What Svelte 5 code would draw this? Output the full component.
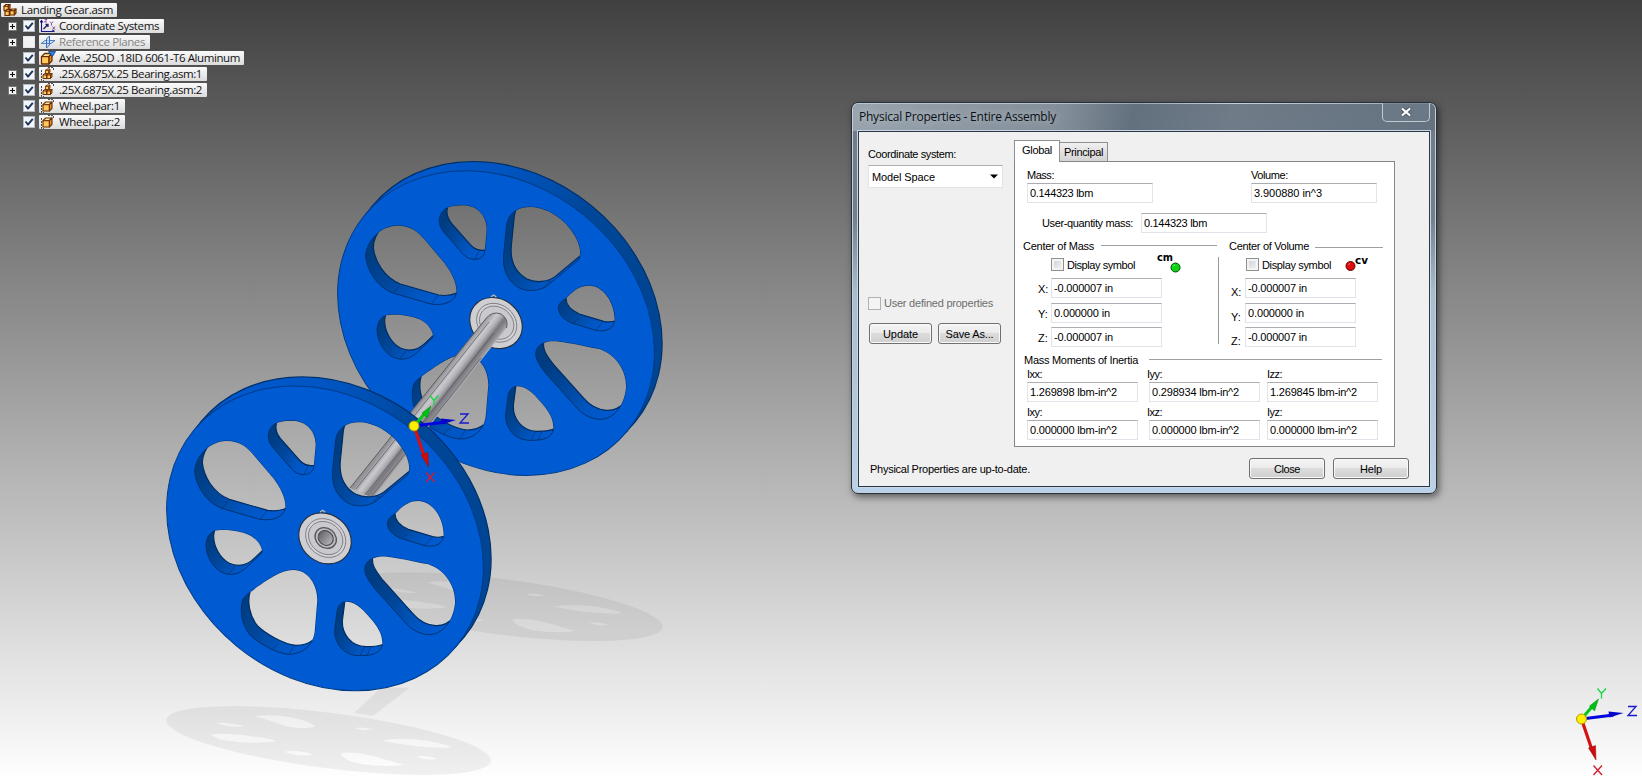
<script>
  const holes = [
    'M200 213 C240 213 262 232 285 260 L340 325 C362 355 378 385 376 415 C372 440 340 454 300 448 L185 415 C135 395 108 345 104 305 C104 265 145 213 200 213Z',
    'M395 152 C435 152 467 180 467 225 L461 290 C460 315 420 325 395 297 L338 232 C322 212 318 185 340 165 C352 155 375 152 395 152Z',
    'M600 157 C660 160 712 205 735 250 C750 280 750 302 742 316 L650 392 C625 410 590 412 565 400 C530 380 514 345 518 300 L527 210 C532 175 560 157 600 157Z',
    'M775 393 C815 393 850 440 851 495 C850 522 825 533 795 527 L722 505 C695 493 682 478 682 458 C686 440 700 436 712 425 C730 405 750 393 775 393Z',
    'M660 560 C690 558 760 575 805 583 C855 600 888 650 885 700 C880 750 850 795 805 794 C775 792 750 775 735 757 L645 657 C620 625 612 610 615 590 C620 570 640 562 660 560Z',
    'M560 695 C590 695 615 725 640 755 C660 780 668 800 667 825 C660 852 635 857 595 857 C550 855 523 820 524 780 L531 725 C534 705 545 695 560 695Z',
    'M400 600 C445 600 472 645 472 690 L464 785 C458 830 425 853 385 853 C345 850 290 815 270 795 C245 765 238 720 248 690 C254 675 275 665 290 652 C320 632 360 600 400 600Z',
    'M175 481 C200 478 245 485 265 494 C290 505 308 530 306 548 L262 590 C240 612 215 620 185 607 C155 590 138 555 138 525 C140 495 155 482 175 481Z'
  ];
  const creases = 'M205 393L187 415 M322 422L300 448 M445 287L430 316 M655 378L640 399 M650 376L661 383 M745 490L725 505 M815 503L793 527 M358 820L338 836 M405 825L385 853 M613 830L600 857 M633 828L621 857 M225 588L206 613';

  const tree = [
    { label: 'Coordinate Systems', width: 100, box: 125, plus: true, on: true, icon: 'cs' },
    { label: 'Reference Planes', width: 86, box: 111, plus: true, on: false, icon: 'planes', muted: true },
    { label: 'Axle .25OD .18ID 6061-T6 Aluminum', width: 181, box: 205, on: true, icon: 'axle' },
    { label: '.25X.6875X.25 Bearing.asm:1', width: 143, box: 168, plus: true, on: true, icon: 'asm' },
    { label: '.25X.6875X.25 Bearing.asm:2', width: 143, box: 168, plus: true, on: true, icon: 'asm' },
    { label: 'Wheel.par:1', width: 61, box: 86, on: true, icon: 'part' },
    { label: 'Wheel.par:2', width: 61, box: 86, on: true, icon: 'part' }
  ];
  const massCoords = [['X:', '-0.000007 in'], ['Y:', '0.000000 in'], ['Z:', '-0.000007 in']];
  const inertia = [
    [['Ixx:', '1.269898 lbm-in^2'], ['Iyy:', '0.298934 lbm-in^2'], ['Izz:', '1.269845 lbm-in^2']],
    [['Ixy:', '0.000000 lbm-in^2'], ['Ixz:', '0.000000 lbm-in^2'], ['Iyz:', '0.000000 lbm-in^2']]
  ];

  // Tracks a label out or in so that it takes the given width in pixels.
  function fit(node, width) {
    const natural = node.getBoundingClientRect().width;
    node.style.letterSpacing = (width - natural) / node.textContent.length + 'px';
  }
</script>

{#snippet wheel(x, y, bored)}
  <g transform="translate({x} {y}) scale(.33333)">
    <g mask="url(#bore)">
      <g fill="url(#rim)" stroke="#00306c" stroke-width="4">
        <g transform="rotate(39.35 518 478)"><ellipse cx="518" cy="478" rx="510" ry="418" fill="#004593" /></g>
      </g>
      <path d="M105 177L128 150L160 118L250 60L400 22L518 22L700 80L908 240L994 566L908 806L885 833L495 505Z" fill="none" />
      <g fill="url(#rim)" clip-path="url(#body)"><rect x="0" y="0" width="1020" height="990" /></g>
      <path d="M105 177L128 150M908 806L885 833" stroke="#00306c" stroke-width="3" />
      <ellipse cx="495" cy="505" rx="510" ry="418" transform="rotate(39.35 495 505)" fill="#005ad2" stroke="#003c86" stroke-width="3" />
      {#each holes as d}
        <path {d} fill="url(#wall)" stroke="#00336f" stroke-width="3" />
      {/each}
      <path d={creases} stroke="#003574" stroke-width="2" fill="none" />
    </g>
    <g clip-path="url(#mouths)">
      {#each holes as d}
        <path {d} transform="translate(23 -27)" fill="none" stroke="#002c60" stroke-width="3.5" />
      {/each}
    </g>
    <g transform="rotate(39.35 495 505)" fill="none" stroke="#77777c" stroke-width="2.5">
      <ellipse cx="495" cy="505" rx="83" ry="72" fill="#cfcfd3" stroke="#24313f" stroke-width="3.5" />
      <ellipse cx="496" cy="503" rx="64" ry="54" fill="#d3d3d7" />
      <ellipse cx="496" cy="503" rx="55" ry="46" fill="#cacace" />
      {#if bored}
        <ellipse cx="496" cy="503" rx="34" ry="29" fill="#bdbdc1" stroke="#55555a" stroke-width="4" />
        <ellipse cx="496" cy="503" rx="24" ry="21" fill="url(#metal-bore)" stroke="#444" stroke-width="3" />
      {/if}
    </g>
    <path d="M480 426L488 421L496 427" fill="none" stroke="#b7b7bb" stroke-width="4" />
  </g>
{/snippet}

{#snippet triad(x, y, zx, zy)}
  <g transform="translate({x} {y})">
    <path d="M0 0L12 -14" stroke="#00c818" stroke-width="3" />
    <path d="M17 -20L8 -13L13 -8Z" fill="#00bf14" stroke="#008d14" stroke-width=".5" />
    <path d="M0 0L32 -4" stroke="#0404df" stroke-width="3" />
    <path d="M42 -6L27 -7.5L28 -1.5Z" fill="#0606c8" />
    <path d="M0 0L10.500 31" stroke="#d51212" stroke-width="3.200" />
    <path d="M14.500 41L7 29L14 26.500Z" fill="#cf0b0b" stroke="#8b1010" stroke-width=".5" />
    <circle r="5" fill="#fff000" stroke="#b09a00" stroke-width="1" />
    <g fill="none" stroke-width="1.300">
      <path d="M16 -30.500L20 -25.500L24.500 -30.500M20 -25.500V-20.500" stroke="#13d943" />
      <path d="M{zx} {zy}h8l-8 9h9" stroke="#1818d0" />
      <path d="M12 46.500l8.500 9.500m0 -9.500l-8.500 9.500" stroke="#d51c2d" />
    </g>
  </g>
{/snippet}

{#snippet cube(x, y, s)}
  <g transform="translate({x} {y}) scale({s})" stroke="#6b2c00" stroke-width={s < 0.8 ? 1.9 : 1.2} stroke-linejoin="round">
    <path d="M0 3L3 0H10L7 3Z" fill="#ffe9a6" />
    <path d="M7 3L10 0V7L7 10Z" fill="#e08a14" />
    <path d="M0 3H7V10H0Z" fill="#ffc95c" />
  </g>
{/snippet}

{#snippet icon(kind)}
  <svg class="icon" width="16" height="14" viewBox="0 0 16 14">
    {#if kind === 'cs'}
      <path d="M1.500 2V12.500H14M0 3.500L1.500 1.500L3 3.500M12.500 11L14.500 12.500" fill="none" stroke="#17178c" stroke-width="1.100" />
      <path d="M3.500 10L8 5.500M5.500 5.500H8V8" fill="none" stroke="#20205f" stroke-width="1.300" />
      <path d="M4.500 .5H7L4.500 3H7M10 2.500L11.500 4.500L13 2.500M11.500 4.500V6.500M12.500 7.500L15 10.500M15 7.500L12.500 10.500" fill="none" stroke="#7d2c96" stroke-width=".8" />
    {:else if kind === 'planes'}
      <path d="M1 8.500L5 5.500H15L11 8.500Z" fill="#cfe2fa" stroke="#4d7fc4" />
      <path d="M6.500 4L9.500 1V10L6.500 13Z" fill="#c1d9f8" fill-opacity=".7" stroke="#3c6cb7" />
      <path d="M1 8.500H11" fill="none" stroke="#4d7fc4" />
    {:else if kind === 'axle'}
      {@render cube(1.5, 2.5, 1.05)}
      <path d="M8.500 .5H15.500L12.500 5.500Z" fill="#2b83de" stroke="#0b3f8c" stroke-width=".8" />
    {:else if kind === 'asm'}
      <path d="M1.500 3V13.500H4M8 .5H13.500V3" stroke="#222" stroke-dasharray="2 1" fill="none" stroke-width=".8" />
      {@render cube(5.5, 2, 0.45)}
      {@render cube(3, 6.5, 0.5)}
      {@render cube(7, 6.5, 0.5)}
    {:else if kind === 'root'}
      {@render cube(2, 1.5, 0.6)}
      {@render cube(3, 6.5, 0.6)}
      {@render cube(8, 6, 0.6)}
    {:else}
      <path d="M1.500 3V13.500H4M8 .5H13.500V3" stroke="#222" stroke-dasharray="2 1" fill="none" stroke-width=".8" />
      {@render cube(3, 3, 0.9)}
    {/if}
  </svg>
{/snippet}

<main>
  <svg class="scene" width="1642" height="780" viewBox="0 0 1642 780">
    <defs>
      <linearGradient id="rim" gradientUnits="userSpaceOnUse" x1="300" y1="20" x2="900" y2="420">
        <stop offset="0" stop-color="#0058cc" /><stop offset=".3" stop-color="#0054bf" />
        <stop offset=".65" stop-color="#004799" /><stop offset="1" stop-color="#004593" />
      </linearGradient>
      <linearGradient id="wall" x1="0" y1=".4" x2=".75" y2="1">
        <stop offset="0" stop-color="#003c80" /><stop offset=".4" stop-color="#00479c" />
        <stop offset=".75" stop-color="#0055c0" /><stop offset="1" stop-color="#0059cf" />
      </linearGradient>
      <linearGradient id="metal-bore"><stop offset="0" stop-color="#66666a" /><stop offset="1" stop-color="#b4b4b8" /></linearGradient>
      <linearGradient id="steel" gradientUnits="userSpaceOnUse" x1="449" y1="365" x2="467" y2="379">
        <stop offset="0" stop-color="#929297" /><stop offset=".13" stop-color="#a9a9ae" />
        <stop offset=".3" stop-color="#cacace" /><stop offset=".48" stop-color="#b0b0b5" />
        <stop offset=".68" stop-color="#77777d" /><stop offset=".85" stop-color="#8d8d92" /><stop offset="1" stop-color="#b3b3b7" />
      </linearGradient>
      <clipPath id="body">
        <ellipse cx="518" cy="478" rx="508" ry="416" transform="rotate(39.35 518 478)" />
        <path d="M105 177L128 150L908 806L885 833Z" />
      </clipPath>
      <clipPath id="mouths">{#each holes as d}<path {d} />{/each}</clipPath>
      <mask id="bore" maskUnits="userSpaceOnUse" x="0" y="0" width="1020" height="990">
        <rect width="1020" height="990" fill="#fff" />
        <g clip-path="url(#mouths)">{#each holes as d}<path {d} transform="translate(23 -27)" />{/each}</g>
      </mask>
      <mask id="gaps" maskUnits="userSpaceOnUse" x="160" y="695" width="335" height="85">
        <rect x="160" y="695" width="335" height="85" fill="#fff" />
        <g fill="#000">
          <path d="M254 714Q276 711 301 718Q316 724 311 725Q291 728 273 720Z" />
          <path d="M209 732Q227 730 251 734Q275 737 273 739Q245 742 219 737Z" />
          <path d="M378 738Q403 734 432 740Q449 744 445 745Q416 746 378 738Z" />
          <path d="M338 751Q346 748 369 753L400 762Q382 765 357 761Q340 757 338 751Z" />
          <path d="M215 721Q224 719 243 724Q233 726 215 721Z" />
          <path d="M352 726Q357 724 370 727Q358 729 352 726Z" />
          <path d="M282 749Q300 747 310 752Q297 754 282 749Z" />
          <path d="M413 754Q420 752 433 756Q423 758 413 754Z" />
        </g>
      </mask>
    </defs>

    <g fill="#000" fill-opacity=".055" transform="translate(-2.100 -8) scale(1.0142)">
      <g mask="url(#gaps)"><ellipse cx="326" cy="738" rx="161.300" ry="27.400" transform="rotate(7.250 326 738)" /></g>
      <g transform="translate(169.300 -132)"><g mask="url(#gaps)"><ellipse cx="326" cy="738" rx="161.300" ry="27.400" transform="rotate(7.250 326 738)" /></g></g>
      <path d="M351 711L378 686H406L370 713.500Z" />
    </g>

    {@render wheel(331, 154.7, false)}
    <path d="M485.500 319Q492 310.500 501 314Q509 319 506.500 328L373 498L350 488Z" fill="url(#steel)" />
    <path d="M350 488L485.500 319Q492 310.500 501 314Q509 319 506.500 328" fill="none" stroke="#5d5d62" stroke-width="1" />
    <path d="M356 489L489 322M365 495L494 333M371 497L481 358" fill="none" stroke="#55555b" stroke-width=".7" />
    {@render wheel(160, 370, true)}
    {@render triad(414, 426, 46, -12)}
    {@render triad(1581.5, 719, 46.5, -12.5)}
  </svg>

  <nav class="tree">
    <div class="chip root">{@render icon('root')}<span use:fit={92}>Landing Gear.asm</span></div>
    {#each tree as row}
      <div class="row">
        <span class="slot">{#if row.plus}<svg width="9" height="9" viewBox="0 0 9 9"><rect x=".5" y=".5" width="8" height="8" fill="#f5f5f5" stroke="#777" /><path d="M2 4.500H7M4.500 2V7" stroke="#111" stroke-width="1.200" /></svg>{/if}</span>
        <svg class="check" width="12" height="12" viewBox="0 0 12 12">
          <rect x=".5" y=".5" width="11" height="11" fill={row.on ? '#f2f6fa' : '#f3f3f3'} stroke={row.on ? '#b4bbc2' : '#e6e6e6'} />
          {#if row.on}<path d="M2.500 5.500L5 8.500L9.800 2.800" fill="none" stroke="#1c315c" stroke-width="1.900" />{/if}
        </svg>
        <div class="chip" class:muted={row.muted} style="width: {row.box}px">{@render icon(row.icon)}<span use:fit={row.width}>{row.label}</span></div>
      </div>
    {/each}
  </nav>

  <section class="dialog">
    <header>
      <h1><span use:fit={197}>Physical Properties - Entire Assembly</span></h1>
      <button class="x" aria-label="Close window"><svg width="12" height="10" viewBox="0 0 12 10"><path d="M2 1.500L10 8.500M10 1.500L2 8.500" stroke="#4b5560" stroke-width="4" /><path d="M2 1.500L10 8.500M10 1.500L2 8.500" stroke="#fff" stroke-width="2.300" /></svg></button>
    </header>
    <div class="client">
      <div class="body">
        <aside>
          <span class="lbl" use:fit={88}>Coordinate system:</span>
          <div class="combo"><span use:fit={63}>Model Space</span><svg width="8" height="5" viewBox="0 0 8 5"><path d="M0 .5H8L4 4.500Z" /></svg></div>
          <div class="user"><i class="box off"></i><span use:fit={109}>User defined properties</span></div>
          <div class="pair"><button><span use:fit={35}>Update</span></button><button><span use:fit={48}>Save As...</span></button></div>
        </aside>
        <div class="tabs">
          <div class="tabbar"><div class="tab active"><span use:fit={30}>Global</span></div><div class="tab"><span use:fit={39}>Principal</span></div></div>
          <div class="panel">
            <div class="top">
              <label><span use:fit={27}>Mass:</span><div class="field wide"><span use:fit={63}>0.144323 lbm</span></div></label>
              <label><span use:fit={37}>Volume:</span><div class="field wide"><span use:fit={68}>3.900880 in^3</span></div></label>
            </div>
            <div class="quantity"><span use:fit={91}>User-quantity mass:</span><div class="field wide"><span use:fit={63}>0.144323 lbm</span></div></div>
            <div class="centers">
              <div class="center mass">
                <div class="legend"><span use:fit={71}>Center of Mass</span><hr /></div>
                <div class="symbol"><i class="box"></i><span use:fit={68}>Display symbol</span>
                  <svg width="30" height="24" viewBox="0 0 30 24"><text x="3" y="8" textLength="16" lengthAdjust="spacingAndGlyphs">cm</text><circle cx="21.500" cy="14.500" r="4.500" fill="#0bd414" stroke="#054b08" /><path d="M19.500 13L21 12" stroke="#9dff9e" /></svg>
                </div>
                {#each massCoords as [axis, value]}
                  <div class="coord"><span>{axis}</span><div class="field"><span use:fit={value[0] === '-' ? 59 : 56}>{value}</span></div></div>
                {/each}
              </div>
              <div class="divider"></div>
              <div class="center volume">
                <div class="legend"><span use:fit={80}>Center of Volume</span><hr /></div>
                <div class="symbol"><i class="box"></i><span use:fit={69}>Display symbol</span>
                  <svg width="30" height="24" viewBox="0 0 30 24"><text x="10" y="11" textLength="13" lengthAdjust="spacingAndGlyphs">cv</text><circle cx="5.500" cy="13" r="4.500" fill="#e00808" stroke="#5e0505" /><path d="M3.500 11.500L5 10.500" stroke="#ff9292" /></svg>
                </div>
                {#each massCoords as [axis, value]}
                  <div class="coord"><span>{axis}</span><div class="field"><span use:fit={value[0] === '-' ? 59 : 56}>{value}</span></div></div>
                {/each}
              </div>
            </div>
            <div class="legend moments"><span use:fit={114}>Mass Moments of Inertia</span><hr /></div>
            {#each inertia as line}
              <div class="inertia">
                {#each line as [name, value]}
                  <label><span use:fit={15}>{name}</span><div class="field"><span use:fit={87}>{value}</span></div></label>
                {/each}
              </div>
            {/each}
          </div>
        </div>
      </div>
      <footer><span class="status"><span use:fit={160}>Physical Properties are up-to-date.</span></span><button><span use:fit={26}>Close</span></button><button><span use:fit={22}>Help</span></button></footer>
    </div>
  </section>
</main>

<style>
  :global(body) { margin: 0; overflow: hidden; }
  main { position: relative; width: 1642px; height: 780px; overflow: hidden; background: linear-gradient(#404040, #fff); font: 11px/14px "Liberation Sans", Arial, sans-serif; color: #000; }
  * { box-sizing: border-box; }
  span { white-space: nowrap; }
  .scene { position: absolute; inset: 0; }
  .tree { position: absolute; left: 1px; top: 3px; font: 11.500px/14px "Open Sans", "Noto Sans", sans-serif; }
  .row { display: flex; align-items: center; height: 16px; }
  .slot { display: flex; width: 22px; padding-left: 7px; }
  .check { margin-right: 4px; }
  .chip { display: flex; align-items: center; height: 14px; background: linear-gradient(#fafafa, #dcdcdc); border-radius: 1px; color: #111; }
  .row .chip { padding-left: 1px; }
  .chip .icon { flex: none; margin-right: 3px; }
  .root { width: 116px; margin-bottom: 1px; padding-left: 1px; }
  .muted { color: #858585; }

  .dialog { position: absolute; left: 851px; top: 102px; width: 586px; height: 392px; padding: 0 6px 7px; border: 1px solid #27313b; border-radius: 7px; background: linear-gradient(#6f7b87 0, #72808e 115px, #a9bdcf 190px, #b9d1ea 100%); box-shadow: inset 0 0 0 1px #c5d0da, 2px 3px 7px rgba(0,0,0,.5); }
  header { display: flex; height: 28px; justify-content: space-between; margin: 0 -5px; padding-left: 6px; background: linear-gradient(100deg, rgba(180,190,200,.6), rgba(160,170,180,.4) 36%, rgba(75,90,105,.35) 48%, transparent 65%, rgba(80,95,110,.35)); border-radius: 5px 5px 0 0; }
  h1 { margin: 0; font: 12px/28px "Open Sans", "Noto Sans", sans-serif; color: #0b1015; text-shadow: 0 0 8px rgba(255,255,255,.55); }
  button { padding: 0; font: inherit; color: #000; border: 1px solid #707070; border-radius: 3px; background: linear-gradient(#f4f4f4, #ebebeb 48%, #dcdcdc 50%, #cfcfcf); box-shadow: inset 0 0 0 1px #f9f9f9; }
  .x { display: flex; justify-content: center; align-items: center; width: 48px; height: 19px; margin: 0 5px 0 0; border: 1px solid #c1c9d0; border-top: 0; border-radius: 0 0 5px 5px; background: rgba(110,122,135,.7); box-shadow: none; }
  .client { height: 356px; border: 1px solid #2b3947; background: #f0f0f0; box-shadow: 0 0 0 1px #c9d7e4; }
  .body { display: flex; height: 316px; }
  aside { width: 155px; padding: 15px 0 0 9px; }
  .lbl { display: inline-block; height: 18px; vertical-align: top; }
  .combo { display: flex; align-items: center; justify-content: space-between; width: 135px; height: 23px; padding: 0 4px 0 3px; background: #fff; border: 1px solid #e2e3ea; border-top-color: #abadb3; }
  .user { display: flex; align-items: center; gap: 3px; margin-top: 108px; color: #6d6d6d; }
  .box { flex: none; width: 13px; height: 13px; border: 1px solid #8e8f8f; background: linear-gradient(135deg, #cbcfd5, #f6f6f6); box-shadow: inset 0 0 0 2px #f4f4f4; }
  .off { border-color: #b1b1b1; background: #f4f4f4; }
  .pair { display: flex; gap: 6px; margin: 13px 0 0 1px; }
  .pair button { width: 63px; height: 21px; }
  .tabs { width: 381px; padding-top: 8px; }
  .tabbar { display: flex; align-items: flex-end; height: 21px; }
  .tab { height: 19px; padding: 2px 0 0; width: 48px; text-align: center; border: 1px solid #8d8f92; border-left: 0; border-bottom: 0; background: linear-gradient(#f0f0f0, #d4d4d4); }
  .active { height: 22px; width: 46px; border-left: 1px solid #8d8f92; background: #fff; margin-bottom: -1px; z-index: 1; }
  .panel { height: 286px; border: 1px solid #84878a; background: #fff; padding: 6px 0 0 8px; }
  label { display: block; }
  label > span { display: inline-block; vertical-align: top; height: 14px; }
  .top { display: flex; gap: 98px; padding-left: 4px; height: 45px; }
  .field { display: flex; align-items: center; width: 111px; height: 20px; padding: 0 0 0 2px; border: 1px solid #e2e3ea; border-top-color: #abadb3; background: #fff; }
  .wide { width: 126px; }
  .top .field, .inertia .field { margin-top: 1px; }
  .quantity { display: flex; align-items: center; gap: 8px; padding-left: 19px; height: 20px; }
  .centers { display: flex; margin-top: 5px; height: 113px; }
  .legend { display: flex; align-items: center; height: 15px; }
  hr { flex: 1; margin: 0; height: 1px; border: 0; background: #a0a0a0; }
  .mass { width: 194px; }
  .mass hr { margin-left: 7px; }
  .moments hr { margin-left: 11px; }
  .divider { width: 1px; height: 87px; margin: 19px 10px 0 1px; background: #999; }
  .volume { width: 154px; }
  .volume hr { margin: 4px 0 0 6px; }
  .symbol { display: flex; gap: 3px; height: 25px; padding: 5px 0 0 28px; }
  .symbol svg { margin: -5px 0 0 16px; }
  .volume .symbol { padding-left: 17px; }
  .volume .symbol svg { margin: -5px 0 0 11px; }
  .symbol text { font: bold 10px "DejaVu Sans", sans-serif; }
  .coord { display: flex; gap: 2px; height: 24.500px; padding-left: 15px; }
  .coord > span { width: 11px; padding-top: 4px; }
  .volume .coord { padding-left: 2px; }
  .volume .coord > span { width: 12px; padding-top: 7px; }
  .moments { margin-top: 3px; padding-left: 1px; width: 359px; height: 11px; }
  .inertia { display: flex; height: 38px; padding: 2px 0 0 4px; }
  .inertia label { width: 122px; }
  .inertia label + label { width: 118px; }
  .inertia label:nth-child(2) > span { margin-left: -2px; }
  footer { display: flex; gap: 8px; padding: 10px 20px 0 11px; }
  footer .status { flex: 1; padding-top: 4px; }
  footer button { width: 76px; height: 21px; }
</style>
